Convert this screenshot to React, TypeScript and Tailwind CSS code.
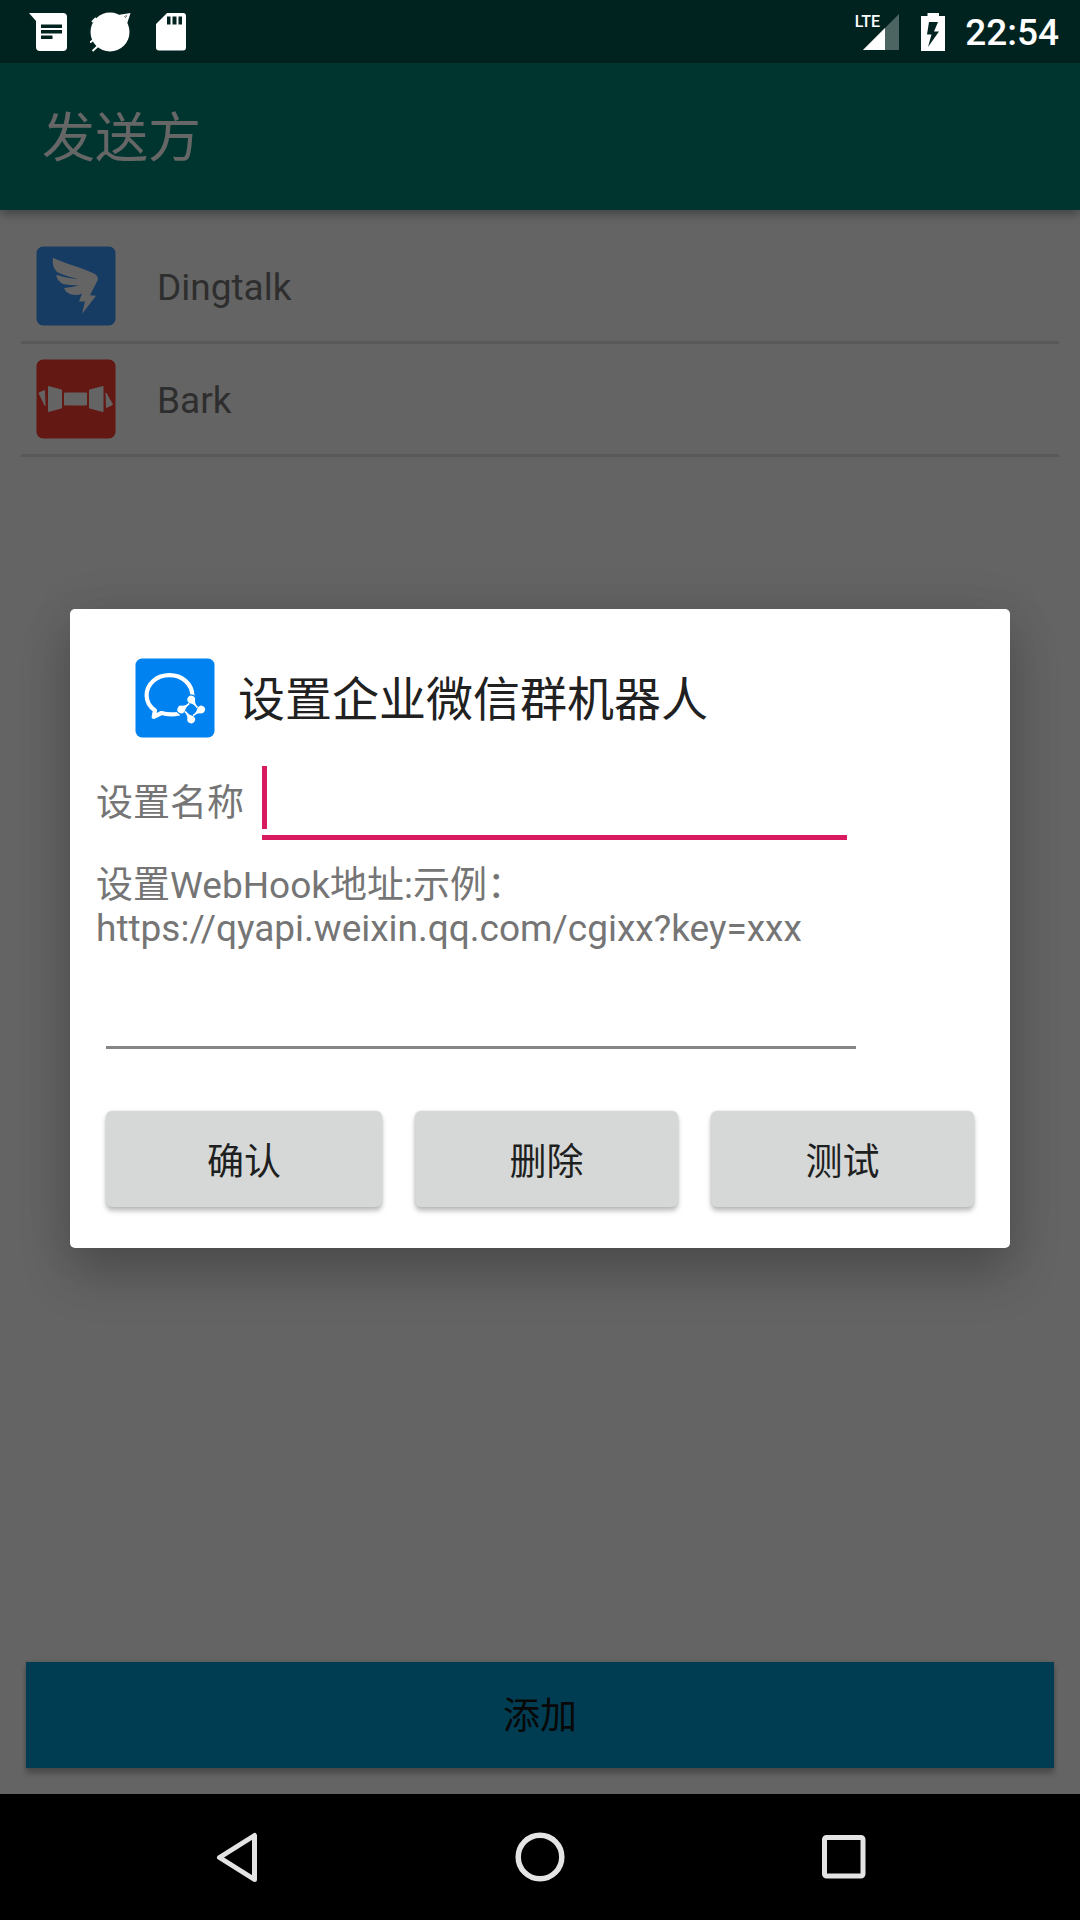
import React from "react";

function MessageIcon() {
  return (
    <svg viewBox="0 0 38 40" className="h-10 w-[38px]" aria-hidden="true">
      <path
        fillRule="evenodd"
        fill="#fff"
        d="M0 1H34q4 0 4 4V35q0 4-4 4H11q-4 0-4-4V9ZM12 12.500V16H33V12.500ZM12 18V21.500H33V18ZM12 23.500V27H23.500V23.500Z"
      />
    </svg>
  );
}

function BallIcon() {
  return (
    <svg viewBox="0 0 42 40" className="h-10 w-[42px]" aria-hidden="true">
      <circle cx="20" cy="20" r="19.500" fill="#fff" />
      <path d="M28 3L40.500 1L37 12Z" fill="#fff" />
      <path d="M2 10L6 6M0 30.500L4 27.500M2.500 39L9 33" stroke="#fff" strokeWidth="2" />
      <path d="M34 5l3-2M35 6l2-2" stroke="#00231f" strokeWidth=".5" />
    </svg>
  );
}

function SdCardIcon() {
  return (
    <svg viewBox="0 0 32 40" className="h-10 w-8" aria-hidden="true">
      <path
        fillRule="evenodd"
        fill="#fff"
        d="M12 1H28q3 0 3 3V35.500q0 3-3 3H4q-3 0-3-3V12ZM12 4.500V12.500H15.500V4.500ZM17.500 4.500V12.500H21.500V4.500ZM23.500 4.500V12.500H27V4.500Z"
      />
    </svg>
  );
}

function SignalIcon() {
  return (
    <svg viewBox="0 0 36 36" className="h-9 w-9" aria-hidden="true">
      <path d="M36 0V36H0Z" fill="#fff" fillOpacity=".3" />
      <path d="M22 14V36H0Z" fill="#fff" />
    </svg>
  );
}

function BatteryIcon() {
  return (
    <svg viewBox="0 0 24 38" className="h-[38px] w-6" aria-hidden="true">
      <path
        fillRule="evenodd"
        fill="#fff"
        d="M6.500 0H18V3H24V38H0V3H6.500ZM8 9L6 21.500H10.500L7 34L18 18.500H13L17 9Z"
      />
    </svg>
  );
}

function DingtalkIcon() {
  return (
    <svg viewBox="0 0 80 80" className="size-20 shrink-0" aria-hidden="true">
      <rect x=".5" y=".5" width="79" height="79" rx="6.500" fill="#3896fa" />
      <path
        fill="#fafafa"
        d="M17 11.700C30 18 46 21.500 58 27.500Q63 30 61.500 34.500L54 49.300L60 49.700L46 68L49 55.500H43L46 47.500Q42 49.500 38.500 49Q30 48 28 42Q36 41.500 43 39.300Q34 39.500 27 38Q21 35 20.300 28.700Q32 32.500 42.500 32.700Q30 30.500 21 26Q15.500 20.500 17 11.700Z"
      />
    </svg>
  );
}

function BarkIcon() {
  return (
    <svg viewBox="0 0 80 80" className="size-20 shrink-0" aria-hidden="true">
      <rect x=".5" y=".5" width="79" height="79" rx="6.500" fill="#fa3c32" />
      <g fill="#fafafa" stroke="#fafafa" strokeLinejoin="round">
        <path d="M3 34L8.500 31.500L9 46.500Z" />
        <path d="M12.500 27.500L25.500 31V49L12.500 52.500Z" />
        <path d="M28.500 34H50.500V46H28.500Z" />
        <path d="M53.500 31L67 27.500V52.500L53.500 49Z" />
        <path d="M70 34L76.500 45.500L70.500 48.500Z" />
      </g>
    </svg>
  );
}

const petal =
  "M53.700 44.500A3.900 3.900 0 1 1 60 42.500Q60 46.500 63.200 49L61.500 50Q58.500 45.800 55.600 45.600Q54.400 45.300 53.700 44.500Z";
const petalTurns = [
  "rotate(0 56.200 51.500)",
  "rotate(90 56.200 51.500)",
  "rotate(180 56.200 51.500)",
  "rotate(270 56.200 51.500)",
];

function WeComIcon() {
  return (
    <svg viewBox="0 0 80 80" className="size-20 shrink-0" aria-hidden="true">
      <rect x=".5" y=".5" width="79" height="79" rx="6.500" fill="#0082f0" />
      <path
        fill="none"
        stroke="#fff"
        strokeWidth="4.200"
        strokeLinejoin="round"
        d="M57.500 38C57 25.500 47 17.200 34.500 17.200C21.500 17.200 11.600 26 11.600 37.500C11.600 43.500 14.500 48.500 20 52.500L18.700 58.800L26.500 55Q35 57.500 44.500 55.500"
      />
      <g fill="#0082f0" stroke="#0082f0" strokeWidth="2.400">
        {petalTurns.map((turn) => (
          <path key={turn} d={petal} transform={turn} />
        ))}
      </g>
      <g fill="#fff">
        {petalTurns.map((turn) => (
          <path key={turn} d={petal} transform={turn} />
        ))}
      </g>
    </svg>
  );
}

const senders = [
  { name: "Dingtalk", Icon: DingtalkIcon },
  { name: "Bark", Icon: BarkIcon },
];

const actionClass =
  "h-24 rounded-[6px] bg-[#d6d8d7] pt-1.5 text-[37px] leading-[43px] text-[#1e1f1f] shadow-[0_4px_5px_rgba(0,0,0,0.25),0_0_3px_rgba(0,0,0,0.12)]";

function StatusBar() {
  return (
    <div className="flex h-[63px] items-center bg-[#00231f] pr-[21px] pl-[29px] text-white">
      <div className="flex flex-1 items-center gap-[23px]">
        <MessageIcon />
        <BallIcon />
        <SdCardIcon />
      </div>
      <div className="relative mr-[22px]">
        <span className="absolute -top-1 right-[19px] text-[16px] leading-6 font-medium">LTE</span>
        <SignalIcon />
      </div>
      <div className="mr-5">
        <BatteryIcon />
      </div>
      <time className="pt-0.5 text-[37px] leading-[43px] font-medium">22:54</time>
    </div>
  );
}

function RobotDialog() {
  return (
    <div
      role="dialog"
      aria-modal="true"
      aria-labelledby="dialog-title"
      className="w-full rounded-[5px] bg-white pt-[49px] pb-[41px] shadow-[0_26px_50px_rgba(0,0,0,0.22),0_0_50px_rgba(0,0,0,0.08)]"
    >
      <div className="flex items-center gap-[23px] pl-[65px]">
        <WeComIcon />
        <h2 id="dialog-title" className="pt-1 text-[47px] leading-[56px] text-[#212121]">
          设置企业微信群机器人
        </h2>
      </div>
      <form className="pt-7 text-[37px] leading-[43px] text-[#757575]" onSubmit={(e) => e.preventDefault()}>
        <div className="flex items-center pr-[163px] pl-[26px]">
          <label htmlFor="name" className="shrink-0">
            设置名称
          </label>
          <div className="ml-[18px] flex-1 border-b-5 border-[#d81b60] pb-1.5">
            <input
              id="name"
              type="text"
              className="block h-[63px] w-full border-l-5 border-[#d81b60] bg-transparent text-[#212121] outline-none"
            />
          </div>
        </div>
        <label htmlFor="hook" className="mt-6 block px-[26px]">
          设置WebHook地址:示例：
          <br />
          https://qyapi.weixin.qq.com/cgixx?key=xxx
        </label>
        <div className="mt-[35px] pr-[154px] pl-9">
          <input
            id="hook"
            type="text"
            className="block h-16 w-full border-b-3 border-[#868686] bg-transparent text-[#212121] outline-none"
          />
        </div>
        <div className="mt-[62px] grid grid-cols-[276fr_263fr_263fr] gap-[33px] px-9">
          <button type="submit" className={actionClass}>确认</button>
          <button type="button" className={actionClass}>删除</button>
          <button type="button" className={actionClass}>测试</button>
        </div>
      </form>
    </div>
  );
}

export default function App() {
  return (
    <div className="flex min-h-screen flex-col bg-black font-['Roboto','Noto_Sans_CJK_SC',sans-serif]">
      <StatusBar />
      <div className="relative flex flex-1 flex-col bg-[#fafafa]">
        <header className="flex h-[147px] items-center bg-[#008577] px-[42px] shadow-[0_4px_10px_rgba(0,0,0,0.35)]">
          <h1 className="pt-1 text-[53px] leading-[62px] text-white">发送方</h1>
        </header>
        <main className="flex flex-1 flex-col pt-[21px]">
          <ul className="flex-1 px-[21px]">
            {senders.map(({ name, Icon }) => (
              <li key={name} className="flex h-[113px] items-center border-b-3 border-[#dedede] pl-[15px]">
                <Icon />
                <span className="ml-[41px] pt-0.5 text-[37px] leading-[43px] text-[#737373]">{name}</span>
              </li>
            ))}
          </ul>
          <div className="p-[26px]">
            <button
              type="button"
              className="block h-[106px] w-full bg-[#0099cc] pt-0.5 text-[37px] leading-[43px] text-[#141414] shadow-[0_6px_5px_rgba(0,0,0,0.22),0_0_5px_rgba(0,0,0,0.15)]"
            >
              添加
            </button>
          </div>
        </main>
        <div className="absolute inset-0 flex items-center justify-center overflow-hidden bg-black/60 px-[70px]">
          <RobotDialog />
        </div>
      </div>
      <nav className="flex h-[126px] items-center justify-center gap-[244px]">
        <button type="button" aria-label="返回">
          <svg viewBox="0 0 60 60" className="size-15" fill="none" stroke="#e4e4e4" strokeWidth="5" strokeLinejoin="round" aria-hidden="true">
            <path d="M13.500 30.500L48.500 8.500V52.500Z" />
          </svg>
        </button>
        <button type="button" aria-label="主屏幕">
          <svg viewBox="0 0 60 60" className="size-15" fill="none" stroke="#e4e4e4" strokeWidth="5.500" aria-hidden="true">
            <circle cx="30" cy="30" r="21.800" />
          </svg>
        </button>
        <button type="button" aria-label="最近任务">
          <svg viewBox="0 0 60 60" className="size-15" fill="none" stroke="#e4e4e4" strokeWidth="5" aria-hidden="true">
            <rect x="10.500" y="10.500" width="38.500" height="38.500" rx="2" />
          </svg>
        </button>
      </nav>
    </div>
  );
}
